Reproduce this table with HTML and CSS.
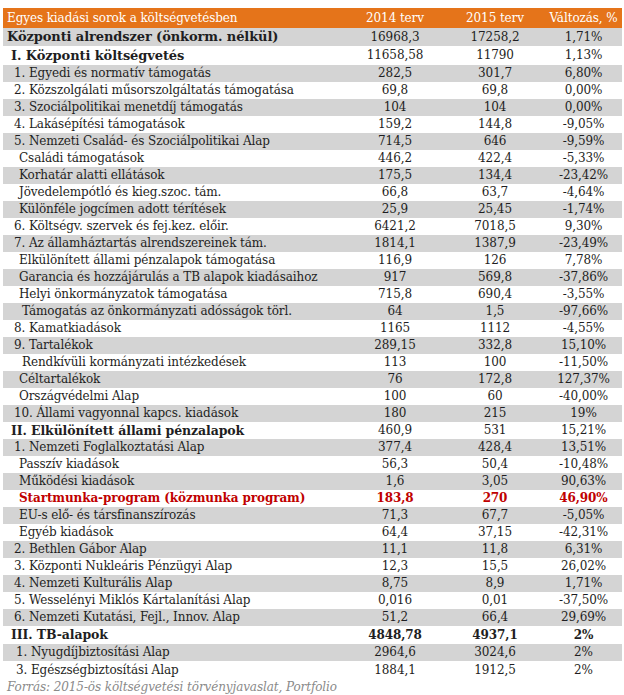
FILE: index.html
```html
<!DOCTYPE html>
<html lang="hu">
<head>
<meta charset="utf-8">
<title>Egyes kiadási sorok a költségvetésben</title>
<link rel="stylesheet" href="styles.css">
</head>
<body>
<div class="wrap">
<table class="budget">
<colgroup><col class="c1"><col class="c2"><col class="c3"><col class="c4"></colgroup>
<thead>
<tr class="head"><th class="label">Egyes kiadási sorok a költségvetésben</th><th>2014 terv</th><th>2015 terv</th><th>Változás, %</th></tr>
</thead>
<tbody>
<tr class="g top"><td class="label l0 b">Központi alrendszer (önkorm. nélkül)</td><td>16968,3</td><td>17258,2</td><td>1,71%</td></tr>
<tr class="top tall"><td class="label l1 b">I. Központi költségvetés</td><td>11658,58</td><td>11790</td><td>1,13%</td></tr>
<tr class="g"><td class="label l2">1. Egyedi és normatív támogatás</td><td>282,5</td><td>301,7</td><td>6,80%</td></tr>
<tr><td class="label l2">2. Közszolgálati műsorszolgáltatás támogatása</td><td>69,8</td><td>69,8</td><td>0,00%</td></tr>
<tr class="g"><td class="label l2">3. Szociálpolitikai menetdíj támogatás</td><td>104</td><td>104</td><td>0,00%</td></tr>
<tr><td class="label l2">4. Lakásépítési támogatások</td><td>159,2</td><td>144,8</td><td>-9,05%</td></tr>
<tr class="g"><td class="label l2">5. Nemzeti Család- és Szociálpolitikai Alap</td><td>714,5</td><td>646</td><td>-9,59%</td></tr>
<tr><td class="label l3">Családi támogatások</td><td>446,2</td><td>422,4</td><td>-5,33%</td></tr>
<tr class="g"><td class="label l3">Korhatár alatti ellátások</td><td>175,5</td><td>134,4</td><td>-23,42%</td></tr>
<tr><td class="label l3">Jövedelempótló és kieg.szoc. tám.</td><td>66,8</td><td>63,7</td><td>-4,64%</td></tr>
<tr class="g"><td class="label l3">Különféle jogcímen adott térítések</td><td>25,9</td><td>25,45</td><td>-1,74%</td></tr>
<tr><td class="label l2">6. Költségv. szervek és fej.kez. előir.</td><td>6421,2</td><td>7018,5</td><td>9,30%</td></tr>
<tr class="g"><td class="label l2">7. Az államháztartás alrendszereinek tám.</td><td>1814,1</td><td>1387,9</td><td>-23,49%</td></tr>
<tr><td class="label l3">Elkülönített állami pénzalapok támogatása</td><td>116,9</td><td>126</td><td>7,78%</td></tr>
<tr class="g"><td class="label l3">Garancia és hozzájárulás a TB alapok kiadásaihoz</td><td>917</td><td>569,8</td><td>-37,86%</td></tr>
<tr><td class="label l3">Helyi önkormányzatok támogatása</td><td>715,8</td><td>690,4</td><td>-3,55%</td></tr>
<tr class="g"><td class="label l4">Támogatás az önkormányzati adósságok törl.</td><td>64</td><td>1,5</td><td>-97,66%</td></tr>
<tr><td class="label l2">8. Kamatkiadások</td><td>1165</td><td>1112</td><td>-4,55%</td></tr>
<tr class="g"><td class="label l2">9. Tartalékok</td><td>289,15</td><td>332,8</td><td>15,10%</td></tr>
<tr><td class="label l4">Rendkívüli kormányzati intézkedések</td><td>113</td><td>100</td><td>-11,50%</td></tr>
<tr class="g"><td class="label l3">Céltartalékok</td><td>76</td><td>172,8</td><td>127,37%</td></tr>
<tr><td class="label l3">Országvédelmi Alap</td><td>100</td><td>60</td><td>-40,00%</td></tr>
<tr class="g"><td class="label l2">10. Állami vagyonnal kapcs. kiadások</td><td>180</td><td>215</td><td>19%</td></tr>
<tr><td class="label l1 b sub">II. Elkülönített állami pénzalapok</td><td>460,9</td><td>531</td><td>15,21%</td></tr>
<tr class="g"><td class="label l2">1. Nemzeti Foglalkoztatási Alap</td><td>377,4</td><td>428,4</td><td>13,51%</td></tr>
<tr><td class="label l3">Passzív kiadások</td><td>56,3</td><td>50,4</td><td>-10,48%</td></tr>
<tr class="g"><td class="label l3">Működési kiadások</td><td>1,6</td><td>3,05</td><td>90,63%</td></tr>
<tr class="hl"><td class="label l3">Startmunka-program (közmunka program)</td><td>183,8</td><td>270</td><td>46,90%</td></tr>
<tr class="g"><td class="label l3">EU-s elő- és társfinanszírozás</td><td>71,3</td><td>67,7</td><td>-5,05%</td></tr>
<tr><td class="label l3">Egyéb kiadások</td><td>64,4</td><td>37,15</td><td>-42,31%</td></tr>
<tr class="g"><td class="label l2">2. Bethlen Gábor Alap</td><td>11,1</td><td>11,8</td><td>6,31%</td></tr>
<tr><td class="label l2">3. Központi Nukleáris Pénzügyi Alap</td><td>12,3</td><td>15,5</td><td>26,02%</td></tr>
<tr class="g"><td class="label l2">4. Nemzeti Kulturális Alap</td><td>8,75</td><td>8,9</td><td>1,71%</td></tr>
<tr><td class="label l2">5. Wesselényi Miklós Kártalanítási Alap</td><td>0,016</td><td>0,01</td><td>-37,50%</td></tr>
<tr class="g"><td class="label l2">6. Nemzeti Kutatási, Fejl., Innov. Alap</td><td>51,2</td><td>66,4</td><td>29,69%</td></tr>
<tr class="strong"><td class="label l1 sub">III. TB-alapok</td><td>4848,78</td><td>4937,1</td><td>2%</td></tr>
<tr class="g"><td class="label l2x">1. Nyugdíjbiztosítási Alap</td><td>2964,6</td><td>3024,6</td><td>2%</td></tr>
<tr class="last"><td class="label l2x">3. Egészségbiztosítási Alap</td><td>1884,1</td><td>1912,5</td><td>2%</td></tr>
</tbody>
</table>
<p class="source">Forrás: 2015-ös költségvetési törvényjavaslat, Portfolio</p>
</div>
</body>
</html>
```

FILE: styles.css
```css
html, body {
  margin: 0;
  padding: 0;
  background: #ffffff;
}
.wrap {
  padding: 8px 2px 0 3px;
}
.budget {
  width: 619px;
  border-collapse: collapse;
  table-layout: fixed;
  font-family: "DejaVu Serif", "Liberation Serif", serif;
  font-size: 12px;
  color: #1e1e22;
  letter-spacing: -0.1px;
}
.c1 { width: 342px; }
.c2 { width: 100px; }
.c3 { width: 100px; }
.c4 { width: 77px; }
.budget th,
.budget td {
  padding: 0;
  height: 17px;
  line-height: 17px;
  text-align: center;
  white-space: nowrap;
  overflow: hidden;
  font-weight: normal;
}
.head th {
  background: #e5741a;
  color: #ffffff;
  height: 20px;
  line-height: 20px;
  font-size: 12px;
}
.budget .label { text-align: left; }
.head .label { padding-left: 4px; }
.g td { background: #d4d4d4; }
.top td { height: 18px; line-height: 18px; }
.tall td { height: 19px; line-height: 19px; }
.strong td { height: 18px; line-height: 18px; font-weight: bold; }
.last td { height: 18px; line-height: 18px; }
.l0 { padding-left: 4px !important; }
.l1 { padding-left: 8px !important; }
.l2 { padding-left: 11px !important; }
.l2x { padding-left: 13px !important; }
.l3 { padding-left: 16px !important; }
.l4 { padding-left: 19px !important; }
.budget .b {
  font-weight: bold;
  font-size: 13px;
}
.budget .sub { font-size: 12.5px; font-weight: bold; }
.hl td {
  color: #c00000;
  font-weight: bold;
}
.source {
  margin: 0;
  padding-left: 4px;
  height: 17px;
  line-height: 17px;
  font-family: "DejaVu Serif", "Liberation Serif", serif;
  font-style: italic;
  font-size: 12px;
  color: #8a8a8a;
  letter-spacing: -0.1px;
}
```
